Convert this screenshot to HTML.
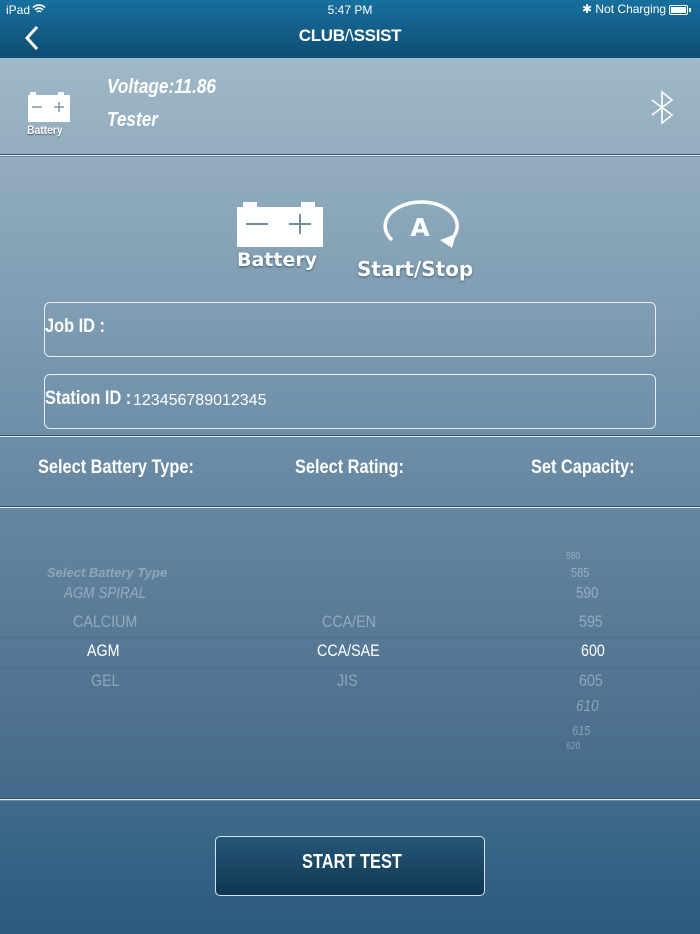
<!DOCTYPE html>
<html><head><meta charset="utf-8"><style>
*{margin:0;padding:0;box-sizing:border-box}
body{width:700px;height:934px;overflow:hidden;position:relative;font-family:"Liberation Sans",sans-serif;color:#fff;background:#6a8aa4}
.a{position:absolute}
.n{font-weight:bold;transform:scaleX(.86);transform-origin:0 0;white-space:nowrap}
.hdr{left:0;top:0;width:700px;height:58px;background:linear-gradient(#17709e,#0f4d73)}
.s1{left:0;top:58px;width:700px;height:97px;background:linear-gradient(#a0b9c8,#92adbf)}
.s2{left:0;top:157px;width:700px;height:279px;background:linear-gradient(#92adbf,#6e8ea8)}
.s3{left:0;top:438px;width:700px;height:70px;background:linear-gradient(#6e8ea8,#6586a0)}
.s4{left:0;top:510px;width:700px;height:289px;background:linear-gradient(#6686a0,#45698a)}
.s5{left:0;top:801px;width:700px;height:133px;background:linear-gradient(#3f6a8b,#2b5a7e)}
.sep{left:0;width:700px;height:2px;background:#3b5266;border-bottom:1px solid #e0eaf0}
.box{border:1.5px solid #e6eef3;border-radius:6px}
.pk{font-size:17px;color:rgba(255,255,255,.35);white-space:nowrap;transform:scaleX(.84);transform-origin:0 0}
</style></head><body>
<div class="a hdr"></div>
<div class="a" style="left:6px;top:3px;font-size:12px">iPad</div>
<svg class="a" style="left:32px;top:4px" width="14" height="10" viewBox="0 0 14 10"><path d="M1 3.5A8.5 8.5 0 0 1 13 3.5M3 5.8A5.5 5.5 0 0 1 11 5.8M5 8A2.5 2.5 0 0 1 9 8" stroke="#fff" stroke-width="1.6" fill="none"/></svg>
<div class="a" style="left:0;width:700px;top:3px;text-align:center;font-size:12px">5:47 PM</div>
<div class="a" style="left:582px;top:2px;font-size:12px">✱ Not Charging</div>
<div class="a" style="left:669px;top:5px;width:19px;height:10px;border:1px solid #fff;border-radius:2px;padding:1px"><div style="width:100%;height:100%;background:#fff"></div></div>
<div class="a" style="left:689px;top:8px;width:2px;height:4px;background:#fff"></div>
<svg class="a" style="left:22px;top:25px" width="20" height="26"><path d="M15 2L5 13L15 24" stroke="#fff" stroke-width="3" fill="none"/></svg>
<div class="a" style="left:0;width:700px;top:26px;text-align:center;font-size:17px;font-weight:bold;letter-spacing:-.3px">CLUB<span style="font-weight:normal">/\</span>SSIST</div>

<div class="a s1"></div>
<div class="a sep" style="top:154px"></div>
<svg class="a" style="left:26px;top:90px" width="46" height="34"><rect x="4" y="2" width="6" height="4" fill="#fff"/><rect x="32" y="2" width="6" height="4" fill="#fff"/><rect x="2" y="5" width="42" height="27" fill="#fff"/><path d="M6 17H16M33 12V22M28 17H38" stroke="#7a97ab" stroke-width="1.5"/></svg>
<div class="a n" style="left:27px;top:123px;font-size:12px;text-shadow:0 1px 1px #556">Battery</div>
<div class="a n" style="left:107px;top:76px;font-size:20px;font-style:italic">Voltage:11.86</div>
<div class="a n" style="left:107px;top:109px;font-size:20px;font-style:italic">Tester</div>
<svg class="a" style="left:648px;top:89px" width="28" height="38"><path d="M4 11L24 26L14 34L14 3L24 11L4 26" stroke="#fff" stroke-width="1.6" fill="none"/></svg>

<div class="a s2"></div>
<svg class="a" style="left:235px;top:200px" width="90" height="50"><rect x="8" y="2" width="14" height="6" fill="#fff"/><rect x="66" y="2" width="14" height="6" fill="#fff"/><rect x="2" y="7" width="86" height="40" fill="#fff"/><path d="M11 24H33M65 14V34M54 24H76" stroke="#6f8ea5" stroke-width="2"/></svg>
<div class="a" style="left:237px;top:249px;font-family:'DejaVu Sans',sans-serif;font-size:19px;font-weight:bold;text-shadow:0 1px 2px #3d5a70">Battery</div>
<svg class="a" style="left:378px;top:198px" width="84" height="54"><path d="M70 44A36 24 0 1 0 14 42" stroke="#fff" stroke-width="3.5" fill="none"/><path d="M62 42L78 36L74 50Z" fill="#fff"/><text x="42" y="38" text-anchor="middle" font-family="DejaVu Sans" font-weight="bold" font-size="25" fill="#fff">A</text></svg>
<div class="a" style="left:357px;top:257px;font-family:'DejaVu Sans',sans-serif;font-size:20px;font-weight:bold;text-shadow:0 1px 2px #3d5a70;white-space:nowrap">Start/Stop</div>
<div class="a box" style="left:44px;top:302px;width:612px;height:55px"></div>
<div class="a n" style="left:45px;top:316px;font-size:19px">Job ID :</div>
<div class="a box" style="left:44px;top:374px;width:612px;height:55px"></div>
<div class="a n" style="left:45px;top:388px;font-size:19px">Station ID :</div>
<div class="a" style="left:133px;top:392px;font-size:16px">123456789012345</div>
<div class="a sep" style="top:435px"></div>

<div class="a s3"></div>
<div class="a n" style="left:38px;top:457px;font-size:19px">Select Battery Type:</div>
<div class="a n" style="left:295px;top:457px;font-size:19px">Select Rating:</div>
<div class="a n" style="left:531px;top:457px;font-size:19px">Set Capacity:</div>
<div class="a sep" style="top:506px"></div>

<div class="a s4"></div>
<div class="a" style="left:0;top:637px;width:700px;height:32px;border-top:1px solid #4e6f8a;border-bottom:1px solid #4e6f8a"></div>
<div class="a pk" style="left:47px;top:565px;font-size:13px;font-style:italic;font-weight:bold;color:rgba(255,255,255,.3);transform:none">Select Battery Type</div>
<div class="a pk" style="left:64px;top:585px;font-size:16px;font-style:italic">AGM SPIRAL</div>
<div class="a pk" style="left:73px;top:612px">CALCIUM</div>
<div class="a pk" style="left:87px;top:641px;color:#fff">AGM</div>
<div class="a pk" style="left:91px;top:671px">GEL</div>
<div class="a pk" style="left:322px;top:612px">CCA/EN</div>
<div class="a pk" style="left:317px;top:641px;color:#fff">CCA/SAE</div>
<div class="a pk" style="left:337px;top:671px">JIS</div>
<div class="a pk" style="left:566px;top:551px;font-size:10px">580</div>
<div class="a pk" style="left:571px;top:565px;font-size:13px">585</div>
<div class="a pk" style="left:576px;top:585px;font-size:16px">590</div>
<div class="a pk" style="left:579px;top:612px">595</div>
<div class="a pk" style="left:581px;top:641px;color:#fff">600</div>
<div class="a pk" style="left:579px;top:671px">605</div>
<div class="a pk" style="left:576px;top:698px;font-size:16px;font-style:italic">610</div>
<div class="a pk" style="left:572px;top:723px;font-size:13px;font-style:italic">615</div>
<div class="a pk" style="left:566px;top:741px;font-size:10px;font-style:italic">620</div>
<div class="a sep" style="top:798px"></div>

<div class="a s5"></div>
<div class="a" style="left:215px;top:836px;width:270px;height:60px;border:1.5px solid #d8e4ec;border-radius:5px;background:linear-gradient(#275677,#0e3852)"></div>
<div class="a" style="left:302px;top:851px;font-size:20px;font-weight:bold;transform:scaleX(.82);transform-origin:0 0;white-space:nowrap">START TEST</div>
</body></html>
